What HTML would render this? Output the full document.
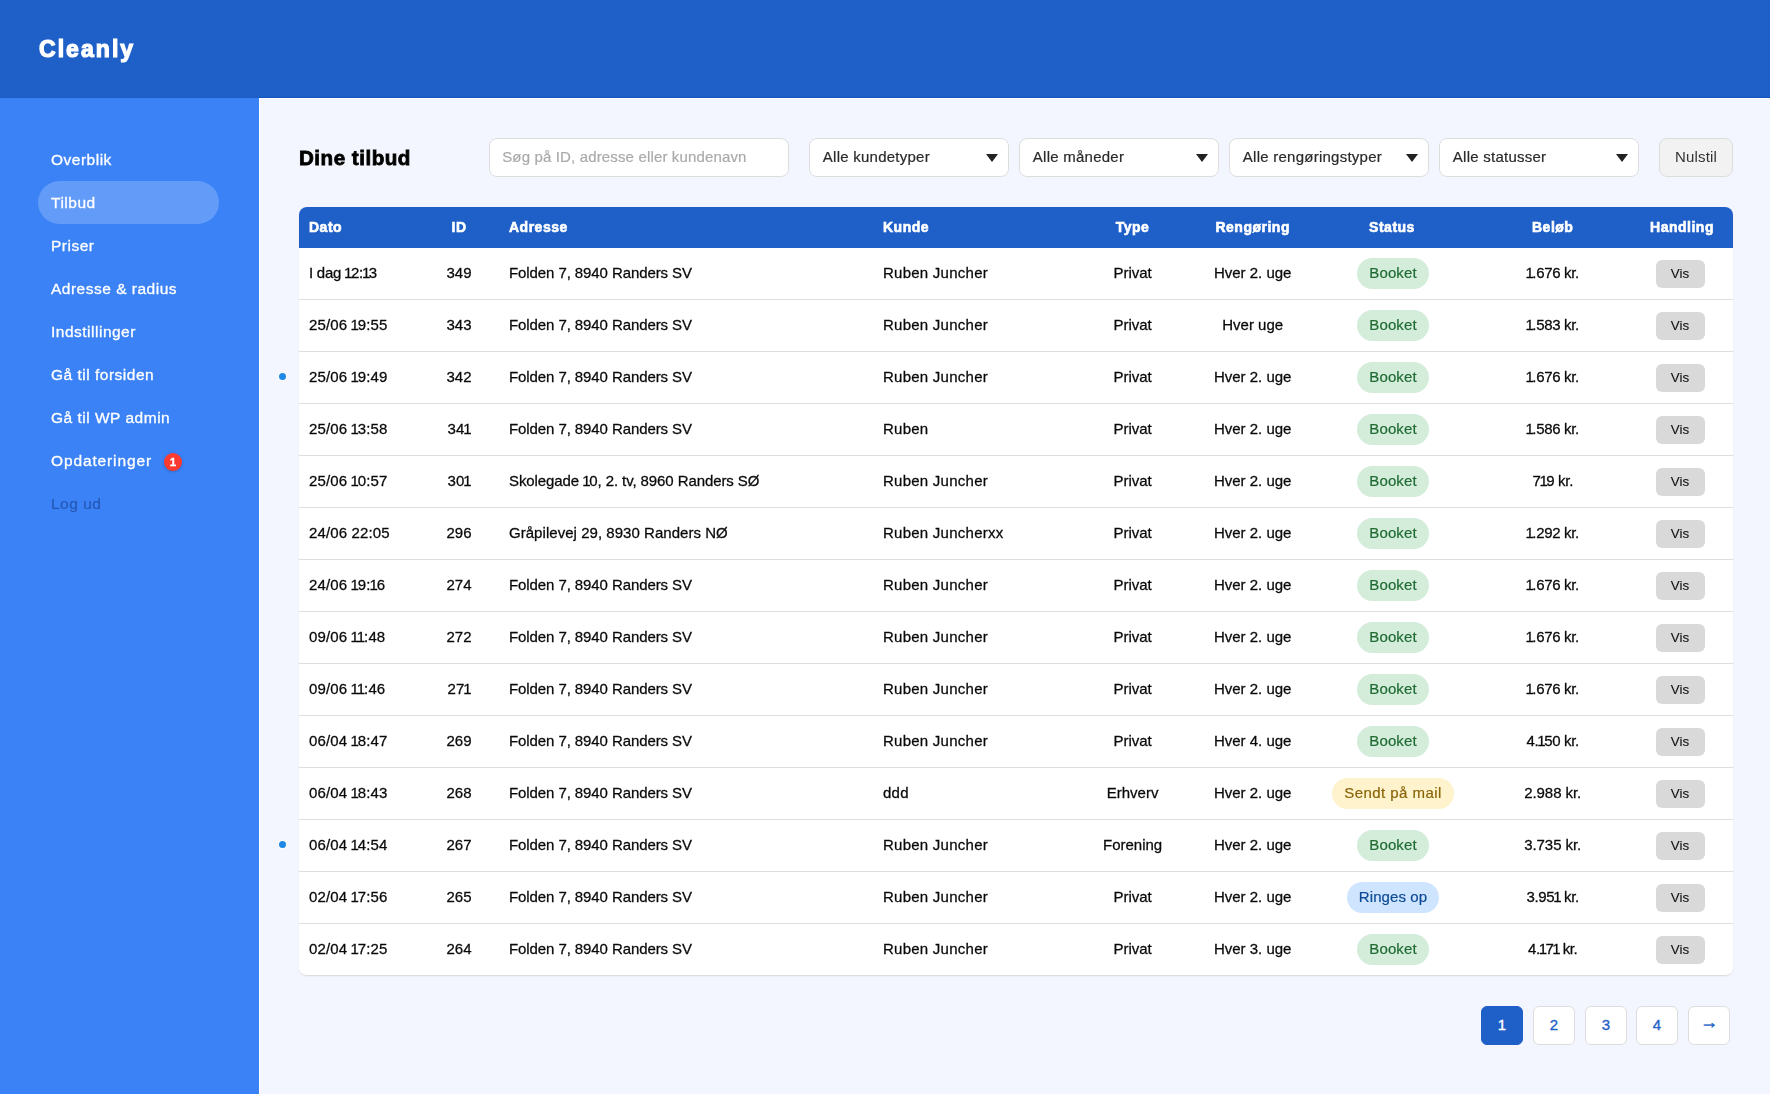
<!DOCTYPE html>
<html lang="da">
<head>
<meta charset="utf-8">
<title>Cleanly – Dine tilbud</title>
<style>
*{box-sizing:border-box;margin:0;padding:0}
html,body{width:1770px;height:1094px;overflow:hidden}
body{font-family:"Liberation Sans",sans-serif;background:#f3f6fe;color:#111;position:relative}
.top{position:absolute;left:0;top:0;width:1770px;height:98px;background:#1e5fc8}
.logo{position:absolute;left:38.5px;top:32px;font-size:23px;line-height:34px;font-weight:700;color:#fff;letter-spacing:2.05px;-webkit-text-stroke:1.2px #fff}
.side{position:absolute;left:0;top:98px;width:259px;height:996px;background:#3b82f6}
.nav{position:absolute;left:38px;top:40px;width:181px}
.nav a{display:block;position:relative;height:43px;line-height:43px;padding-left:13px;color:#fff;font-size:15.5px;border-radius:22px;text-decoration:none;letter-spacing:0.5px;-webkit-text-stroke:0.3px #fff}
.nav a.on{background:#629cf8}
.nav a.out{color:#2458b5;-webkit-text-stroke:0.2px #2458b5}
.cnt{display:block;width:18px;height:18px;border-radius:50%;background:#ff3b30;color:#fff;font-size:11.5px;font-weight:700;line-height:18px;text-align:center;position:absolute;left:126px;top:14px;letter-spacing:0;-webkit-text-stroke:0.3px #fff;box-shadow:0 1px 3px rgba(0,0,0,.22)}
.main{position:absolute;left:259px;top:98px;width:1511px;height:996px;border-left:1px solid #fff;border-top:1px solid #fff;box-shadow:0 -1px 0 #1454c2}
h1{position:absolute;left:299px;top:140px;font-size:20.6px;line-height:36px;font-weight:700;color:#000;letter-spacing:0.5px;-webkit-text-stroke:0.8px #000}
.inp{position:absolute;top:138px;height:39px;background:#fff;border:1px solid #ddd;border-radius:8px;font-size:15px;line-height:35px;padding-left:12.8px;color:#2a2a2a;white-space:nowrap;letter-spacing:0.25px;-webkit-text-stroke:0.2px currentColor}
.search{left:489px;width:300px;color:#aaa;letter-spacing:0.15px;padding-left:12.2px}
.sel:after{content:"";position:absolute;right:10px;top:15px;border-left:6px solid transparent;border-right:6px solid transparent;border-top:8px solid #222}
.reset{position:absolute;left:1659px;top:138px;width:74px;height:39px;background:#f2f2f2;border:1px solid #ddd;border-radius:8px;font-size:15px;line-height:35px;letter-spacing:0.2px;text-align:center;color:#333}
.tbl,.inp,.reset,h1,.logo,.nav{will-change:transform}
.tbl{position:absolute;left:299px;top:207px;width:1434px;background:#fff;border-radius:8px;box-shadow:0 1px 2px rgba(0,0,0,.04)}
.th{height:41px;background:#1e5fc8;border-radius:8px 8px 0 0;position:relative;color:#fff;font-weight:700;font-size:14px;letter-spacing:0.5px;-webkit-text-stroke:0.6px #fff}
.th span,.tr span{position:absolute;top:0;white-space:nowrap}
.th span{line-height:41px}
.tr{height:52px;border-bottom:1px solid #ddd;position:relative;font-size:15px;color:#0a0a0a}
.tr:last-child{border-bottom-color:#ddd;border-radius:0 0 8px 8px}
.tr span{line-height:49px;-webkit-text-stroke:0.27px currentColor}
.c1{left:10px}
.c2{left:120px;width:80px;text-align:center}
.c3{left:210px}
.tr .c3{letter-spacing:-0.09px}
.c4{left:584px}
.tr .c4{letter-spacing:0.25px}
.c5{left:773.6px;width:120px;text-align:center}
.c6{left:883.7px;width:140px;text-align:center}
.c7{left:1013px;width:160px;text-align:center}
.c8{left:1173.7px;width:160px;text-align:center}
.c9{left:1333px;width:100px;text-align:center}
.badge{display:inline-block;font-weight:400;height:31px;line-height:29px;padding:0 12.5px 2px;border-radius:16px;vertical-align:middle;position:relative;top:-1px;left:1px;letter-spacing:0.1px;-webkit-text-stroke-width:0.2px}
.b-g{background:#d4edda;color:#1f6b33}
.b-y{background:#fff3cd;color:#8a6508;letter-spacing:0.45px}
.b-b{background:#cfe5ff;color:#0c4a94;padding:0 11.7px 2px}
.vis{display:inline-block;font-weight:400;width:49px;height:28px;line-height:28px;background:#d9d9d9;border-radius:6px;font-size:13.33px;color:#111;vertical-align:middle;position:relative;top:0px;left:-2px;-webkit-text-stroke:0.1px #111}
.dot{position:absolute;left:-20.2px;top:20.8px;width:7.4px;height:7.4px;border-radius:50%;background:#1e88e5;box-shadow:0 0 0 1px #fff}
.tr em{font-style:normal;margin:0 -1.2px 0 -1px}
.tr .c1{letter-spacing:0.13px}
.tr .c8{letter-spacing:-0.15px}
.pg{position:absolute;top:1006px;width:41.3px;height:39px;border:1px solid #ddd;border-radius:6px;background:#fff;color:#1e5fc8;font-size:15px;line-height:35px;text-align:center;-webkit-text-stroke:0.35px currentColor}
.pg.ar{font-size:18px;line-height:30.5px;-webkit-text-stroke:0.5px currentColor}
.pg.on{background:#1e5fc8;border-color:#1e5fc8;color:#fff}
</style>
</head>
<body>
<div class="top"><div class="logo">Cleanly</div></div>
<div class="side">
 <div class="nav">
  <a>Overblik</a>
  <a class="on">Tilbud</a>
  <a>Priser</a>
  <a>Adresse &amp; radius</a>
  <a>Indstillinger</a>
  <a>Gå til forsiden</a>
  <a>Gå til WP admin</a>
  <a style="letter-spacing:.87px">Opdateringer<b class="cnt">1</b></a>
  <a class="out">Log ud</a>
 </div>
</div>
<div class="main"></div>
<h1>Dine tilbud</h1>
<div class="inp search">Søg på ID, adresse eller kundenavn</div>
<div class="inp sel" style="left:809px;width:200px">Alle kundetyper</div>
<div class="inp sel" style="left:1019px;width:200px">Alle måneder</div>
<div class="inp sel" style="left:1229px;width:200px">Alle rengøringstyper</div>
<div class="inp sel" style="left:1439px;width:200px">Alle statusser</div>
<div class="reset">Nulstil</div>
<div class="tbl">
 <div class="th"><span class="c1">Dato</span><span class="c2">ID</span><span class="c3">Adresse</span><span class="c4">Kunde</span><span class="c5">Type</span><span class="c6">Rengøring</span><span class="c7">Status</span><span class="c8">Beløb</span><span class="c9">Handling</span></div>
<div class="tr"><span class="c1" style="letter-spacing:-.25px">I dag <em>1</em>2:<em>1</em>3</span><span class="c2">349</span><span class="c3">Folden 7, 8940 Randers SV</span><span class="c4">Ruben Juncher</span><span class="c5">Privat</span><span class="c6">Hver 2. uge</span><span class="c7"><b class="badge b-g">Booket</b></span><span class="c8" style="letter-spacing:-0.32px"><em>1</em>.676 kr.</span><span class="c9"><b class="vis">Vis</b></span></div>
<div class="tr"><span class="c1">25/06 <em>1</em>9:55</span><span class="c2">343</span><span class="c3">Folden 7, 8940 Randers SV</span><span class="c4">Ruben Juncher</span><span class="c5">Privat</span><span class="c6">Hver uge</span><span class="c7"><b class="badge b-g">Booket</b></span><span class="c8" style="letter-spacing:-0.32px"><em>1</em>.583 kr.</span><span class="c9"><b class="vis">Vis</b></span></div>
<div class="tr"><i class="dot"></i><span class="c1">25/06 <em>1</em>9:49</span><span class="c2">342</span><span class="c3">Folden 7, 8940 Randers SV</span><span class="c4">Ruben Juncher</span><span class="c5">Privat</span><span class="c6">Hver 2. uge</span><span class="c7"><b class="badge b-g">Booket</b></span><span class="c8" style="letter-spacing:-0.32px"><em>1</em>.676 kr.</span><span class="c9"><b class="vis">Vis</b></span></div>
<div class="tr"><span class="c1">25/06 <em>1</em>3:58</span><span class="c2">34<em>1</em></span><span class="c3">Folden 7, 8940 Randers SV</span><span class="c4">Ruben</span><span class="c5">Privat</span><span class="c6">Hver 2. uge</span><span class="c7"><b class="badge b-g">Booket</b></span><span class="c8" style="letter-spacing:-0.32px"><em>1</em>.586 kr.</span><span class="c9"><b class="vis">Vis</b></span></div>
<div class="tr"><span class="c1">25/06 <em>1</em>0:57</span><span class="c2">30<em>1</em></span><span class="c3">Skolegade <em>1</em>0, 2. tv, 8960 Randers SØ</span><span class="c4">Ruben Juncher</span><span class="c5">Privat</span><span class="c6">Hver 2. uge</span><span class="c7"><b class="badge b-g">Booket</b></span><span class="c8" style="letter-spacing:-0.32px">7<em>1</em>9 kr.</span><span class="c9"><b class="vis">Vis</b></span></div>
<div class="tr"><span class="c1">24/06 22:05</span><span class="c2">296</span><span class="c3" style="letter-spacing:.04px">Gråpilevej 29, 8930 Randers NØ</span><span class="c4">Ruben Juncherxx</span><span class="c5">Privat</span><span class="c6">Hver 2. uge</span><span class="c7"><b class="badge b-g">Booket</b></span><span class="c8" style="letter-spacing:-0.32px"><em>1</em>.292 kr.</span><span class="c9"><b class="vis">Vis</b></span></div>
<div class="tr"><span class="c1">24/06 <em>1</em>9:<em>1</em>6</span><span class="c2">274</span><span class="c3">Folden 7, 8940 Randers SV</span><span class="c4">Ruben Juncher</span><span class="c5">Privat</span><span class="c6">Hver 2. uge</span><span class="c7"><b class="badge b-g">Booket</b></span><span class="c8" style="letter-spacing:-0.32px"><em>1</em>.676 kr.</span><span class="c9"><b class="vis">Vis</b></span></div>
<div class="tr"><span class="c1">09/06 <em>1</em><em>1</em>:48</span><span class="c2">272</span><span class="c3">Folden 7, 8940 Randers SV</span><span class="c4">Ruben Juncher</span><span class="c5">Privat</span><span class="c6">Hver 2. uge</span><span class="c7"><b class="badge b-g">Booket</b></span><span class="c8" style="letter-spacing:-0.32px"><em>1</em>.676 kr.</span><span class="c9"><b class="vis">Vis</b></span></div>
<div class="tr"><span class="c1">09/06 <em>1</em><em>1</em>:46</span><span class="c2">27<em>1</em></span><span class="c3">Folden 7, 8940 Randers SV</span><span class="c4">Ruben Juncher</span><span class="c5">Privat</span><span class="c6">Hver 2. uge</span><span class="c7"><b class="badge b-g">Booket</b></span><span class="c8" style="letter-spacing:-0.32px"><em>1</em>.676 kr.</span><span class="c9"><b class="vis">Vis</b></span></div>
<div class="tr"><span class="c1">06/04 <em>1</em>8:47</span><span class="c2">269</span><span class="c3">Folden 7, 8940 Randers SV</span><span class="c4">Ruben Juncher</span><span class="c5">Privat</span><span class="c6">Hver 4. uge</span><span class="c7"><b class="badge b-g">Booket</b></span><span class="c8" style="letter-spacing:-0.32px">4.<em>1</em>50 kr.</span><span class="c9"><b class="vis">Vis</b></span></div>
<div class="tr"><span class="c1">06/04 <em>1</em>8:43</span><span class="c2">268</span><span class="c3">Folden 7, 8940 Randers SV</span><span class="c4">ddd</span><span class="c5">Erhverv</span><span class="c6">Hver 2. uge</span><span class="c7"><b class="badge b-y">Sendt på mail</b></span><span class="c8" style="letter-spacing:-0.05px">2.988 kr.</span><span class="c9"><b class="vis">Vis</b></span></div>
<div class="tr"><i class="dot"></i><span class="c1">06/04 <em>1</em>4:54</span><span class="c2">267</span><span class="c3">Folden 7, 8940 Randers SV</span><span class="c4">Ruben Juncher</span><span class="c5">Forening</span><span class="c6">Hver 2. uge</span><span class="c7"><b class="badge b-g">Booket</b></span><span class="c8" style="letter-spacing:-0.05px">3.735 kr.</span><span class="c9"><b class="vis">Vis</b></span></div>
<div class="tr"><span class="c1">02/04 <em>1</em>7:56</span><span class="c2">265</span><span class="c3">Folden 7, 8940 Randers SV</span><span class="c4">Ruben Juncher</span><span class="c5">Privat</span><span class="c6">Hver 2. uge</span><span class="c7"><b class="badge b-b">Ringes op</b></span><span class="c8" style="letter-spacing:-0.32px">3.95<em>1</em> kr.</span><span class="c9"><b class="vis">Vis</b></span></div>
<div class="tr"><span class="c1">02/04 <em>1</em>7:25</span><span class="c2">264</span><span class="c3">Folden 7, 8940 Randers SV</span><span class="c4">Ruben Juncher</span><span class="c5">Privat</span><span class="c6">Hver 3. uge</span><span class="c7"><b class="badge b-g">Booket</b></span><span class="c8" style="letter-spacing:-0.45px">4.<em>1</em>7<em>1</em> kr.</span><span class="c9"><b class="vis">Vis</b></span></div>
</div>
<div class="pg on" style="left:1481px;width:42px">1</div>
<div class="pg" style="left:1533.3px">2</div>
<div class="pg" style="left:1585.2px;width:41.6px">3</div>
<div class="pg" style="left:1636.3px">4</div>
<div class="pg ar" style="left:1688.4px">→</div>
</body>
</html>
